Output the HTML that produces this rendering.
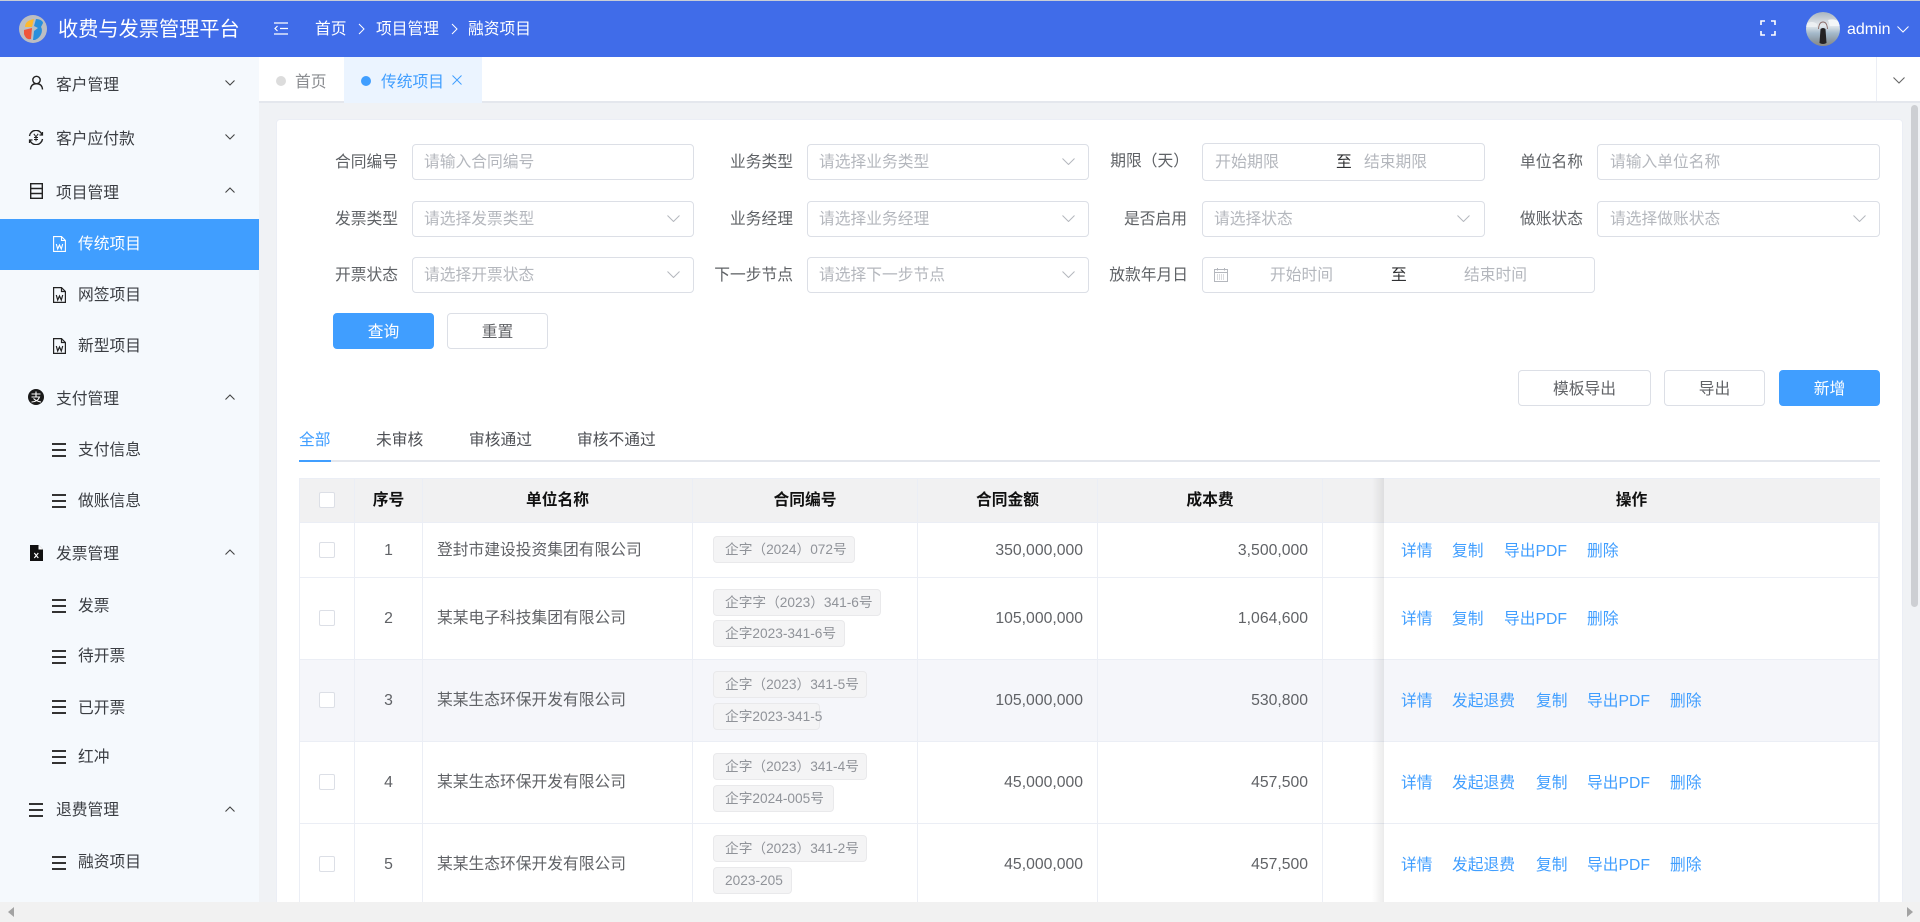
<!DOCTYPE html>
<html lang="zh-CN"><head><meta charset="utf-8"><title>收费与发票管理平台</title>
<style>
html,body{margin:0;padding:0;width:1920px;height:922px;overflow:hidden;background:#f0f2f5}
body{position:relative;font-family:"Liberation Sans","Noto Sans CJK SC",sans-serif;font-size:15.75px;color:#606266}
div,span,svg{position:absolute;box-sizing:border-box}
.t{white-space:nowrap;line-height:24px;height:24px;margin-top:2px}
.side{color:#3a3d42}
.w{color:#fff;margin-top:1px}
.box{background:#fff;border:1px solid #dcdfe6;border-radius:4px}
.ph{color:#b4b7bd}
.lb{width:100px;text-align:right;color:#5f6266}
.btn{height:36px;line-height:37px;text-align:center;border:1px solid #dcdfe6;border-radius:4px;background:#fff;color:#606266}
.pri{background:#409eff;border-color:#409eff;color:#fff}
.hl{left:299px;width:1581px;height:1px;background:#ebeef5}
.vl{top:478px;height:424px;width:1px;background:#ebeef5}
.th{top:488px;font-weight:700;color:#111;text-align:center;margin-top:1px}
.cb{left:319px;width:16px;height:16px;background:#fff;border:1px solid #dcdfe6;border-radius:2px}
.tag{left:713px;height:27px;line-height:26px;padding-left:11px;font-size:13.7px;color:#909399;background:#f4f4f5;border:1px solid #e9e9eb;border-radius:4px;white-space:nowrap}
.num{left:355px;width:67px;text-align:center}
.name{left:437px}
.amt{left:930px;width:153px;text-align:right}
.cost{left:1150px;width:158px;text-align:right}
.a{color:#409eff}
.bar{background:#333;height:2px;width:14px}
</style></head><body>

<!-- header -->
<div style="left:0;top:0;width:1920px;height:1px;background:#c9cdd6"></div>
<div style="left:0;top:1px;width:1920px;height:56px;background:#406ce9"></div>
<svg style="left:19px;top:15px" width="28" height="28" viewBox="0 0 28 28"><circle cx="14" cy="14" r="14" fill="#bcbec2"/><path d="M6 12C6 7 10 5 15 4L13 12Z" fill="#fdb92e"/><path d="M5 15L13 13L12 24C8 25 6 22 5 19Z" fill="#f0553b"/><path d="M17 4C21 4 24 6 24 8L22 12C24 15 23 22 16 25L14 25L15 16L19 13L15 11Z" fill="#2a8fdc"/></svg>
<div class="t w" style="left:58px;top:17px;font-size:20.2px">收费与发票管理平台</div>
<svg style="left:274px;top:22px" width="14" height="13" viewBox="0 0 14 13" fill="none" stroke="#fff" stroke-width="1.2"><path d="M0 1H14M6 6.5H14M0 12H14"/><path d="M3.5 4L1 6.5L3.5 9" /></svg>
<div class="t w" style="left:315px;top:17px">首页</div>
<svg style="left:358px;top:23px" width="7" height="12" viewBox="0 0 7 12" fill="none" stroke="#fff" stroke-width="1"><path d="M1 1L6 6L1 11"/></svg>
<div class="t w" style="left:376px;top:17px">项目管理</div>
<svg style="left:451px;top:23px" width="7" height="12" viewBox="0 0 7 12" fill="none" stroke="#fff" stroke-width="1"><path d="M1 1L6 6L1 11"/></svg>
<div class="t w" style="left:468px;top:17px">融资项目</div>
<svg style="left:1760px;top:20px" width="16" height="16" viewBox="0 0 16 16" fill="none" stroke="#fff" stroke-width="1.6"><path d="M1 5V1H5M11 1H15V5M15 11V15H11M5 15H1V11"/></svg>
<svg style="left:1806px;top:12px" width="34" height="34" viewBox="0 0 34 34"><defs><clipPath id="av"><circle cx="17" cy="17" r="17"/></clipPath><linearGradient id="sky" x1="0" y1="0" x2="0" y2="1"><stop offset="0" stop-color="#a9b5c0"/><stop offset=".4" stop-color="#e6eaee"/><stop offset=".62" stop-color="#a5bacb"/><stop offset=".85" stop-color="#8b98a2"/><stop offset="1" stop-color="#8f8a7f"/></linearGradient></defs><g clip-path="url(#av)"><rect width="34" height="34" fill="url(#sky)"/><path d="M22 8Q28 6 34 10V14H24Z" fill="#f4f6f8"/><path d="M0 12Q6 8 11 12V15H0Z" fill="#eceff2"/><path d="M12.5 17Q13 10 17 10Q21 10 21.5 17" fill="none" stroke="#8a6a66" stroke-width=".9"/><path d="M14.5 17Q17 15 19.5 17L20.5 31Q17 33 13.5 31Z" fill="#242122"/></g></svg>
<div class="t w" style="left:1847px;top:17px;font-size:16px">admin</div>
<svg style="left:1897px;top:26px" width="12" height="7" viewBox="0 0 12 7" fill="none" stroke="#fff" stroke-width="1"><path d="M0.5 0.5L6 6L11.5 0.5"/></svg>

<!-- sidebar -->
<div style="left:0;top:57px;width:259px;height:845px;background:#f5f9fd"></div>
<div style="left:0;top:219px;width:259px;height:51px;background:#409eff"></div>

<svg style="left:29px;top:75px" width="15" height="15" viewBox="0 0 15 15" fill="none" stroke="#222" stroke-width="1.4"><circle cx="7.5" cy="5" r="3.7"/><path d="M1.5 14.5C1.8 10.5 4 8.7 7.5 8.7S13.2 10.5 13.5 14.5"/></svg>
<div class="t side" style="left:56px;top:72px">客户管理</div>
<svg class="dn" style="left:225px;top:80px" width="10" height="6" viewBox="0 0 10 6" fill="none" stroke="#444" stroke-width="1.1"><path d="M0.5 0.5L5 5L9.5 0.5"/></svg>

<svg style="left:28px;top:130px" width="16" height="15" viewBox="0 0 16 15" fill="none" stroke="#222" stroke-width="1.4"><path d="M1.5 6A6.5 6.5 0 0 1 14 4.5M14.5 9A6.5 6.5 0 0 1 2 10.5"/><path d="M14.5 2V5H11.5M1.5 13V10H4.5" stroke-width="1.2"/><path d="M5.8 3.8L8 6.8L10.2 3.8M8 6.8V11.2M6 7.5H10M6 9.5H10" stroke-width="1"/></svg>
<div class="t side" style="left:56px;top:126px">客户应付款</div>
<svg style="left:225px;top:134px" width="10" height="6" viewBox="0 0 10 6" fill="none" stroke="#444" stroke-width="1.1"><path d="M0.5 0.5L5 5L9.5 0.5"/></svg>

<svg style="left:30px;top:183px" width="13" height="16" viewBox="0 0 13 16" fill="none" stroke="#222" stroke-width="1.4"><rect x="0.7" y="0.7" width="11.6" height="14.6"/><path d="M0.7 5.5H12.3M0.7 10.5H12.3"/></svg>
<div class="t side" style="left:56px;top:180px">项目管理</div>
<svg style="left:225px;top:187px" width="10" height="6" viewBox="0 0 10 6" fill="none" stroke="#444" stroke-width="1.1"><path d="M0.5 5.5L5 1L9.5 5.5"/></svg>

<svg style="left:53px;top:236px" width="13" height="16" viewBox="0 0 13 16" fill="none" stroke="#fff" stroke-width="1.1"><path d="M0.6 0.6H8.5L12.4 4.5V15.4H0.6Z"/><path d="M8.5 0.6V4.5H12.4"/><path d="M3.3 8L4.7 13L6.5 9L8.3 13L9.7 8"/></svg>
<div class="t w" style="left:78px;top:231px;margin-top:2px">传统项目</div>

<svg style="left:53px;top:287px" width="13" height="16" viewBox="0 0 13 16" fill="none" stroke="#222" stroke-width="1.2"><path d="M0.6 0.6H8.5L12.4 4.5V15.4H0.6Z"/><path d="M8.5 0.6V4.5H12.4"/><path d="M3.3 8L4.7 13L6.5 9L8.3 13L9.7 8"/></svg>
<div class="t side" style="left:78px;top:282px">网签项目</div>

<svg style="left:53px;top:338px" width="13" height="16" viewBox="0 0 13 16" fill="none" stroke="#222" stroke-width="1.2"><path d="M0.6 0.6H8.5L12.4 4.5V15.4H0.6Z"/><path d="M8.5 0.6V4.5H12.4"/><path d="M3.3 8L4.7 13L6.5 9L8.3 13L9.7 8"/></svg>
<div class="t side" style="left:78px;top:333px">新型项目</div>

<svg style="left:28px;top:389px" width="16" height="16" viewBox="0 0 16 16"><circle cx="8" cy="8" r="8" fill="#1a1a1a"/><path d="M3.5 5H12.5M8 2.5V8M3.5 8H11.5C10.5 11 7.5 12.8 3.5 13M5.5 9.5C7.5 11.5 10 12.5 13 13" fill="none" stroke="#fff" stroke-width="1.1"/></svg>
<div class="t side" style="left:56px;top:386px">支付管理</div>
<svg style="left:225px;top:394px" width="10" height="6" viewBox="0 0 10 6" fill="none" stroke="#444" stroke-width="1.1"><path d="M0.5 5.5L5 1L9.5 5.5"/></svg>

<div class="bar" style="left:52px;top:443px"></div><div class="bar" style="left:52px;top:449px"></div><div class="bar" style="left:52px;top:455px"></div>
<div class="t side" style="left:78px;top:437px">支付信息</div>
<div class="bar" style="left:52px;top:494px"></div><div class="bar" style="left:52px;top:500px"></div><div class="bar" style="left:52px;top:506px"></div>
<div class="t side" style="left:78px;top:488px">做账信息</div>

<svg style="left:30px;top:545px" width="13" height="16" viewBox="0 0 13 16"><path d="M0 0H8.5L13 4.5V16H0Z" fill="#111"/><path d="M8.5 0V4.5H13" fill="#fff"/><path d="M4.3 8L8.3 13M8.3 8L4.3 13" stroke="#fff" stroke-width="1.1" fill="none"/></svg>
<div class="t side" style="left:56px;top:541px">发票管理</div>
<svg style="left:225px;top:549px" width="10" height="6" viewBox="0 0 10 6" fill="none" stroke="#444" stroke-width="1.1"><path d="M0.5 5.5L5 1L9.5 5.5"/></svg>

<div class="bar" style="left:52px;top:599px"></div><div class="bar" style="left:52px;top:605px"></div><div class="bar" style="left:52px;top:611px"></div>
<div class="t side" style="left:78px;top:593px">发票</div>
<div class="bar" style="left:52px;top:650px"></div><div class="bar" style="left:52px;top:656px"></div><div class="bar" style="left:52px;top:662px"></div>
<div class="t side" style="left:78px;top:643px">待开票</div>
<div class="bar" style="left:52px;top:700px"></div><div class="bar" style="left:52px;top:706px"></div><div class="bar" style="left:52px;top:712px"></div>
<div class="t side" style="left:78px;top:695px">已开票</div>
<div class="bar" style="left:52px;top:750px"></div><div class="bar" style="left:52px;top:756px"></div><div class="bar" style="left:52px;top:762px"></div>
<div class="t side" style="left:78px;top:744px">红冲</div>
<div class="bar" style="left:29px;top:803px"></div><div class="bar" style="left:29px;top:809px"></div><div class="bar" style="left:29px;top:815px"></div>
<div class="t side" style="left:56px;top:797px">退费管理</div>
<svg style="left:225px;top:806px" width="10" height="6" viewBox="0 0 10 6" fill="none" stroke="#444" stroke-width="1.1"><path d="M0.5 5.5L5 1L9.5 5.5"/></svg>
<div class="bar" style="left:52px;top:856px"></div><div class="bar" style="left:52px;top:862px"></div><div class="bar" style="left:52px;top:868px"></div>
<div class="t side" style="left:78px;top:849px">融资项目</div>

<!-- tab strip -->
<div style="left:259px;top:57px;width:1661px;height:44px;background:#fff"></div>
<div style="left:259px;top:101px;width:1661px;height:2px;background:#e4e7ed"></div>
<div style="left:276px;top:76px;width:10px;height:10px;border-radius:50%;background:#dcdcdc"></div>
<div class="t" style="left:295px;top:69px;color:#8a8c90">首页</div>
<div style="left:344px;top:57px;width:138px;height:46px;background:#ebf4ff"></div>
<div style="left:361px;top:76px;width:10px;height:10px;border-radius:50%;background:#409eff"></div>
<div class="t" style="left:381px;top:69px;color:#409eff">传统项目</div>
<svg style="left:452px;top:75px" width="10" height="10" viewBox="0 0 10 10" fill="none" stroke="#409eff" stroke-width="1"><path d="M0.5 0.5L9.5 9.5M9.5 0.5L0.5 9.5"/></svg>
<div style="left:1876px;top:57px;width:1px;height:44px;background:#ebeef5"></div>
<svg style="left:1893px;top:77px" width="12" height="7" viewBox="0 0 12 7" fill="none" stroke="#666" stroke-width="1.1"><path d="M0.5 0.5L6 6L11.5 0.5"/></svg>

<!-- scrollbar -->
<div style="left:1911px;top:105px;width:7px;height:502px;border-radius:4px;background:#cdcfd3"></div>

<!-- card -->
<div style="left:276px;top:119px;width:1627px;height:800px;background:#fff;border:1px solid #ebeef5;border-radius:4px"></div>

<!-- form row 1 -->
<div class="t lb" style="left:298px;top:149px">合同编号</div>
<div class="box" style="left:412px;top:144px;width:282px;height:36px"></div>
<div class="t ph" style="left:424px;top:149px">请输入合同编号</div>
<div class="t lb" style="left:693px;top:149px">业务类型</div>
<div class="box" style="left:807px;top:144px;width:282px;height:36px"></div>
<div class="t ph" style="left:819px;top:149px">请选择业务类型</div>
<svg style="left:1062px;top:158px" width="13" height="7" viewBox="0 0 13 7" fill="none" stroke="#b4b7bd" stroke-width="1"><path d="M0.5 0.5L6.5 6.5L12.5 0.5"/></svg>
<div class="t lb" style="left:1089px;top:148px">期限（天）</div>
<div class="box" style="left:1202px;top:143px;width:283px;height:38px"></div>
<div class="t ph" style="left:1215px;top:149px;font-size:16px">开始期限</div>
<div class="t" style="left:1336px;top:149px;color:#303133">至</div>
<div class="t ph" style="left:1364px;top:149px">结束期限</div>
<div class="t lb" style="left:1483px;top:149px">单位名称</div>
<div class="box" style="left:1597px;top:144px;width:283px;height:36px"></div>
<div class="t ph" style="left:1610px;top:149px">请输入单位名称</div>

<!-- form row 2 -->
<div class="t lb" style="left:298px;top:206px">发票类型</div>
<div class="box" style="left:412px;top:201px;width:282px;height:36px"></div>
<div class="t ph" style="left:424px;top:206px">请选择发票类型</div>
<svg style="left:667px;top:215px" width="13" height="7" viewBox="0 0 13 7" fill="none" stroke="#b4b7bd" stroke-width="1"><path d="M0.5 0.5L6.5 6.5L12.5 0.5"/></svg>
<div class="t lb" style="left:693px;top:206px">业务经理</div>
<div class="box" style="left:807px;top:201px;width:282px;height:36px"></div>
<div class="t ph" style="left:819px;top:206px">请选择业务经理</div>
<svg style="left:1062px;top:215px" width="13" height="7" viewBox="0 0 13 7" fill="none" stroke="#b4b7bd" stroke-width="1"><path d="M0.5 0.5L6.5 6.5L12.5 0.5"/></svg>
<div class="t lb" style="left:1087px;top:206px">是否启用</div>
<div class="box" style="left:1202px;top:201px;width:283px;height:36px"></div>
<div class="t ph" style="left:1214px;top:206px">请选择状态</div>
<svg style="left:1457px;top:215px" width="13" height="7" viewBox="0 0 13 7" fill="none" stroke="#b4b7bd" stroke-width="1"><path d="M0.5 0.5L6.5 6.5L12.5 0.5"/></svg>
<div class="t lb" style="left:1483px;top:206px">做账状态</div>
<div class="box" style="left:1597px;top:201px;width:283px;height:36px"></div>
<div class="t ph" style="left:1610px;top:206px">请选择做账状态</div>
<svg style="left:1853px;top:215px" width="13" height="7" viewBox="0 0 13 7" fill="none" stroke="#b4b7bd" stroke-width="1"><path d="M0.5 0.5L6.5 6.5L12.5 0.5"/></svg>

<!-- form row 3 -->
<div class="t lb" style="left:298px;top:262px">开票状态</div>
<div class="box" style="left:412px;top:257px;width:282px;height:36px"></div>
<div class="t ph" style="left:424px;top:262px">请选择开票状态</div>
<svg style="left:667px;top:271px" width="13" height="7" viewBox="0 0 13 7" fill="none" stroke="#b4b7bd" stroke-width="1"><path d="M0.5 0.5L6.5 6.5L12.5 0.5"/></svg>
<div class="t lb" style="left:693px;top:262px">下一步节点</div>
<div class="box" style="left:807px;top:257px;width:282px;height:36px"></div>
<div class="t ph" style="left:819px;top:262px">请选择下一步节点</div>
<svg style="left:1062px;top:271px" width="13" height="7" viewBox="0 0 13 7" fill="none" stroke="#b4b7bd" stroke-width="1"><path d="M0.5 0.5L6.5 6.5L12.5 0.5"/></svg>
<div class="t lb" style="left:1088px;top:262px">放款年月日</div>
<div class="box" style="left:1202px;top:257px;width:393px;height:36px"></div>
<svg style="left:1214px;top:268px" width="14" height="14" viewBox="0 0 14 14" fill="none" stroke="#b4b7bd" stroke-width="1"><rect x="0.5" y="1.5" width="13" height="12"/><path d="M0.5 4.5H13.5M3.5 0V2.5M10.5 0V2.5"/><path d="M3 7H11M3 9H11M3 11H11" stroke-dasharray="1 1"/></svg>
<div class="t ph" style="left:1270px;top:262px">开始时间</div>
<div class="t" style="left:1391px;top:262px;color:#303133">至</div>
<div class="t ph" style="left:1464px;top:262px">结束时间</div>

<!-- buttons -->
<div class="btn pri" style="left:333px;top:313px;width:101px">查询</div>
<div class="btn" style="left:447px;top:313px;width:101px">重置</div>
<div class="btn" style="left:1518px;top:370px;width:133px">模板导出</div>
<div class="btn" style="left:1664px;top:370px;width:101px">导出</div>
<div class="btn pri" style="left:1779px;top:370px;width:101px">新增</div>

<!-- status tabs -->
<div class="t a" style="left:299px;top:427px">全部</div>
<div class="t" style="left:376px;top:427px;color:#4d4f54">未审核</div>
<div class="t" style="left:469px;top:427px;color:#4d4f54">审核通过</div>
<div class="t" style="left:577px;top:427px;color:#4d4f54">审核不通过</div>
<div style="left:299px;top:460px;width:1581px;height:2px;background:#e4e7ed"></div>
<div style="left:299px;top:460px;width:32px;height:2px;background:#409eff"></div>

<!-- table backgrounds -->
<div style="left:299px;top:478px;width:1581px;height:45px;background:#f1f1f2"></div>
<div style="left:299px;top:659px;width:1581px;height:83px;background:#f5f6fa"></div>
<div class="hl" style="top:478px"></div>
<div class="hl" style="top:522px"></div>
<div class="hl" style="top:577px"></div>
<div class="hl" style="top:659px"></div>
<div class="hl" style="top:741px"></div>
<div class="hl" style="top:823px"></div>
<div class="vl" style="left:299px"></div>
<div class="vl" style="left:354px"></div>
<div class="vl" style="left:422px"></div>
<div class="vl" style="left:692px"></div>
<div class="vl" style="left:917px"></div>
<div class="vl" style="left:1097px"></div>
<div class="vl" style="left:1322px"></div>

<!-- table head -->
<div class="cb" style="top:492px"></div>
<div class="t th" style="left:355px;width:67px">序号</div>
<div class="t th" style="left:423px;width:269px">单位名称</div>
<div class="t th" style="left:693px;width:224px">合同编号</div>
<div class="t th" style="left:918px;width:179px">合同金额</div>
<div class="t th" style="left:1098px;width:224px">成本费</div>
<div class="t th" style="left:1384px;width:495px">操作</div>

<!-- rows -->
<div class="cb" style="top:542px"></div>
<div class="t num" style="top:537px">1</div>
<div class="t name" style="top:537px">登封市建设投资集团有限公司</div>
<div class="tag" style="top:536px;width:142px">企字（2024）072号</div>
<div class="t amt" style="top:537px">350,000,000</div>
<div class="t cost" style="top:537px">3,500,000</div>

<div class="cb" style="top:610px"></div>
<div class="t num" style="top:605px">2</div>
<div class="t name" style="top:605px">某某电子科技集团有限公司</div>
<div class="tag" style="top:589px;width:168px">企字字（2023）341-6号</div>
<div class="tag" style="top:620px;width:132px">企字2023-341-6号</div>
<div class="t amt" style="top:605px">105,000,000</div>
<div class="t cost" style="top:605px">1,064,600</div>

<div class="cb" style="top:692px"></div>
<div class="t num" style="top:687px">3</div>
<div class="t name" style="top:687px">某某生态环保开发有限公司</div>
<div class="tag" style="top:671px;width:154px">企字（2023）341-5号</div>
<div class="tag" style="top:703px;width:107px">企字2023-341-5</div>
<div class="t amt" style="top:687px">105,000,000</div>
<div class="t cost" style="top:687px">530,800</div>

<div class="cb" style="top:774px"></div>
<div class="t num" style="top:769px">4</div>
<div class="t name" style="top:769px">某某生态环保开发有限公司</div>
<div class="tag" style="top:753px;width:154px">企字（2023）341-4号</div>
<div class="tag" style="top:785px;width:121px">企字2024-005号</div>
<div class="t amt" style="top:769px">45,000,000</div>
<div class="t cost" style="top:769px">457,500</div>

<div class="cb" style="top:856px"></div>
<div class="t num" style="top:851px">5</div>
<div class="t name" style="top:851px">某某生态环保开发有限公司</div>
<div class="tag" style="top:835px;width:154px">企字（2023）341-2号</div>
<div class="tag" style="top:867px;width:79px">2023-205</div>
<div class="t amt" style="top:851px">45,000,000</div>
<div class="t cost" style="top:851px">457,500</div>

<!-- fixed column -->
<div style="left:1372px;top:478px;width:12px;height:424px;background:linear-gradient(to right,rgba(0,0,0,0),rgba(0,0,0,.08))"></div>
<div style="left:1878px;top:523px;width:2px;height:379px;background:#ebeef5"></div>

<div class="t a" style="left:1401px;top:538px">详情</div><div class="t a" style="left:1452px;top:538px">复制</div><div class="t a" style="left:1504px;top:538px">导出PDF</div><div class="t a" style="left:1587px;top:538px">删除</div>
<div class="t a" style="left:1401px;top:606px">详情</div><div class="t a" style="left:1452px;top:606px">复制</div><div class="t a" style="left:1504px;top:606px">导出PDF</div><div class="t a" style="left:1587px;top:606px">删除</div>
<div class="t a" style="left:1401px;top:688px">详情</div><div class="t a" style="left:1452px;top:688px">发起退费</div><div class="t a" style="left:1536px;top:688px">复制</div><div class="t a" style="left:1587px;top:688px">导出PDF</div><div class="t a" style="left:1670px;top:688px">删除</div>
<div class="t a" style="left:1401px;top:770px">详情</div><div class="t a" style="left:1452px;top:770px">发起退费</div><div class="t a" style="left:1536px;top:770px">复制</div><div class="t a" style="left:1587px;top:770px">导出PDF</div><div class="t a" style="left:1670px;top:770px">删除</div>
<div class="t a" style="left:1401px;top:852px">详情</div><div class="t a" style="left:1452px;top:852px">发起退费</div><div class="t a" style="left:1536px;top:852px">复制</div><div class="t a" style="left:1587px;top:852px">导出PDF</div><div class="t a" style="left:1670px;top:852px">删除</div>

<!-- horizontal scrollbar -->
<div style="left:0;top:902px;width:1920px;height:20px;background:#f1f1f1"></div>
<svg style="left:8px;top:907px" width="6" height="10" viewBox="0 0 6 10"><path d="M6 0V10L0 5Z" fill="#a3a3a3"/></svg>
<svg style="left:1907px;top:907px" width="6" height="10" viewBox="0 0 6 10"><path d="M0 0V10L6 5Z" fill="#a3a3a3"/></svg>
</body></html>
